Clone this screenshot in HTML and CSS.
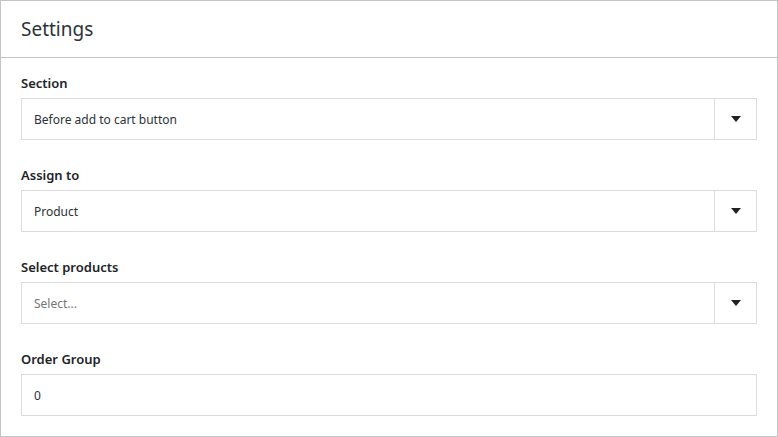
FILE: index.html
```html
<!DOCTYPE html>
<html lang="en">
<head>
<meta charset="utf-8">
<title>Settings</title>
<link rel="stylesheet" href="styles.css">
</head>
<body>
<div class="panel">
  <div class="panel-header">
    <h2 class="panel-title">Settings</h2>
  </div>
  <div class="panel-body">
    <div class="field">
      <label class="field-label">Section</label>
      <div class="select">
        <span class="select-value">Before add to cart button</span>
        <span class="select-toggle"><span class="caret"></span></span>
      </div>
    </div>
    <div class="field">
      <label class="field-label">Assign to</label>
      <div class="select">
        <span class="select-value">Product</span>
        <span class="select-toggle"><span class="caret"></span></span>
      </div>
    </div>
    <div class="field">
      <label class="field-label">Select products</label>
      <div class="select">
        <span class="select-value placeholder">Select...</span>
        <span class="select-toggle"><span class="caret"></span></span>
      </div>
    </div>
    <div class="field">
      <label class="field-label">Order Group</label>
      <div class="text-input">
        <span class="select-value">0</span>
      </div>
    </div>
  </div>
</div>
</body>
</html>
```
FILE: styles.css
```css
* { box-sizing: border-box; }
html, body { margin: 0; padding: 0; background: #fff; }
body {
  font-family: "Noto Sans", "Open Sans", sans-serif;
  color: #1d2327;
  width: 778px;
  height: 437px;
}
.panel {
  width: 778px;
  height: 437px;
  border: 1px solid #c3c4c7;
  background: #fff;
}
.panel-header {
  height: 57px;
  padding: 14px 20px;
  border-bottom: 1px solid #c3c4c7;
}
.panel-title {
  margin: 0;
  font-size: 19px;
  font-weight: 400;
  line-height: 28px;
  color: #2c3338;
}
.panel-body {
  padding: 16px 20px 20px;
  display: flex;
  flex-direction: column;
  gap: 26px;
}
.field {
  display: flex;
  flex-direction: column;
  gap: 6px;
}
.field-label {
  font-size: 13px;
  font-weight: 600;
  line-height: 18px;
  color: #1d2327;
}
.select, .text-input {
  height: 42px;
  border: 1px solid #dcdcde;
  display: flex;
  align-items: stretch;
  background: #fff;
}
.select-value {
  flex: 1;
  display: flex;
  align-items: center;
  padding-left: 12px;
  font-size: 12px;
  color: #2c3338;
}
.select-value.placeholder { color: #757575; }
.select-toggle {
  width: 42px;
  border-left: 1px solid #dcdcde;
  display: flex;
  align-items: center;
  justify-content: center;
}
.caret {
  width: 0;
  height: 0;
  border-left: 5px solid transparent;
  border-right: 5px solid transparent;
  border-top: 6px solid #1d2327;
}
```
